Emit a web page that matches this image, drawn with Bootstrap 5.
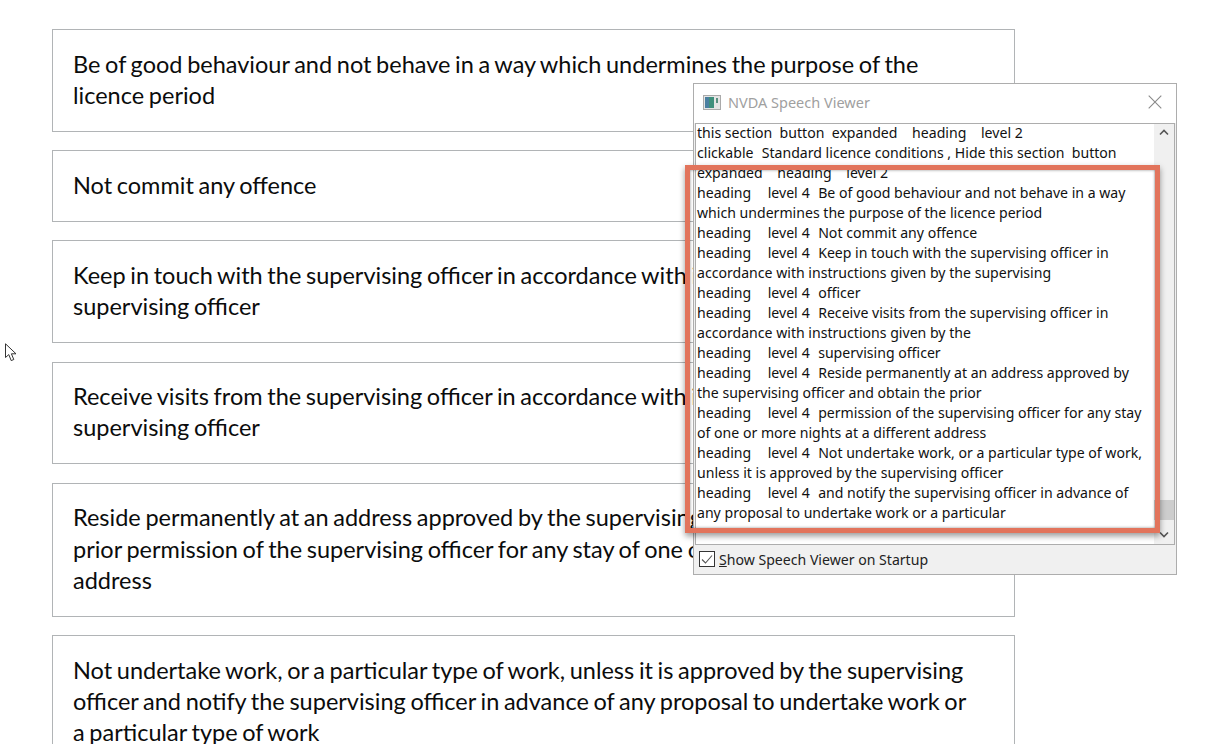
<!DOCTYPE html>
<html lang="en"><head><meta charset="utf-8"><title>Licence conditions</title>
<link href="https://cdn.jsdelivr.net/npm/bootstrap@5.3.0/dist/css/bootstrap.min.css" rel="stylesheet">
<style>
html,body{height:744px;overflow:hidden;background:#fff}
.lic-page{position:relative;height:744px;overflow:hidden;padding:29px 0 0 52px}
.lic-stack{width:963px;gap:18.8px}
.lic-box{border:1px solid #b1b4b6;padding:18.5px 20px 19.5px;font:400 23.5px/31.25px Lato,sans-serif;word-spacing:-1.35px;color:#0b0c0c;white-space:nowrap;overflow:hidden;flex:none}
.cursor-ico{position:absolute;left:5px;top:343px}
.nv-win{position:absolute;left:693px;top:83px;width:484px;height:492px;background:#f0f0f0;border:1px solid #adadad}
.nv-title{height:39px;background:#fff;padding:0 0 3px 9px;font:400 14.5px "Noto Sans",sans-serif;color:#a0a0a0;gap:7px}
.nv-close{margin-left:auto;margin-right:14px}
.nv-body{height:422px;margin:0 1px;border:1px solid #adadad;background:#fff;overflow:hidden;position:relative;padding-left:1px;font:400 14.1px/20px "Noto Sans",sans-serif;color:#111;white-space:pre}
.nv-lines{margin-top:-1px}
.nv-pre{word-spacing:.45px}
.nv-scroll{position:absolute;right:0;top:0;bottom:0;width:20px;background:#f0f0f0}
.nv-thumb{position:absolute;left:0;right:0;top:376px;height:20px;background:#cdcdcd}
.nv-up{position:absolute;left:5px;top:5px}
.nv-down{position:absolute;left:5px;bottom:6px}
.nv-foot{height:29px;padding-left:4px;gap:2px;font:400 14.1px "Noto Sans",sans-serif;color:#222}
.nv-red{position:absolute;left:685px;top:165px;width:475px;height:368px;border:5.5px solid #e2745c;box-shadow:0 3px 6px rgba(0,0,0,.4),inset 0 0 3px rgba(0,0,0,.45)}
</style></head>
<body>
<div class="lic-page">
  <div class="d-flex flex-column lic-stack">
    <div class="lic-box">Be of good behaviour and not behave in a way which undermines the purpose of the<br>licence period</div>
    <div class="lic-box">Not commit any offence</div>
    <div class="lic-box">Keep in touch with the supervising officer in accordance with instructions given by the<br>supervising officer</div>
    <div class="lic-box">Receive visits from the supervising officer in accordance with instructions given by the<br>supervising officer</div>
    <div class="lic-box">Reside permanently at an address approved by the supervising officer and obtain the<br>prior permission of the supervising officer for any stay of one or more nights at a different<br>address</div>
    <div class="lic-box">Not undertake work, or a particular type of work, unless it is approved by the supervising<br>officer and notify the supervising officer in advance of any proposal to undertake work or<br>a particular type of work</div>
  </div>
  <svg class="cursor-ico" width="14" height="19" viewBox="0 0 14 19"><path d="M.5.8V14.5L3.8 11.6 6.2 17.6 8.8 16.5 6.4 10.8H11Z" fill="#fff" stroke="#333" stroke-width="1"/></svg>
  <div class="nv-win">
    <div class="nv-title d-flex align-items-center">
      <svg width="18" height="15" viewBox="0 0 18 15"><rect x=".5" y=".5" width="17" height="14" fill="#e4e4e4" stroke="#aaa"/><rect x="2" y="2" width="9" height="11" fill="#3f8f7c"/><rect x="2" y="2" width="4" height="11" fill="#4a7fa0"/><rect x="13" y="3" width="2" height="5" fill="#5a8f80"/></svg>
      <span>NVDA Speech Viewer</span>
      <svg class="nv-close" width="14" height="14" viewBox="0 0 14 14"><path d="M.7.7 13.3 13.3M13.3.7.7 13.3" stroke="#8a8a8a" stroke-width="1.1" fill="none"/></svg>
    </div>
    <div class="nv-body"><div class="nv-lines"><div>this section  button  expanded    heading    level 2</div><div><span class="nv-pre">clickable  </span>Standard licence conditions , Hide this section  button</div><div>expanded    heading    level 2</div><div><span class="nv-pre">heading    level 4  </span>Be of good behaviour and not behave in a way</div><div>which undermines the purpose of the licence period</div><div><span class="nv-pre">heading    level 4  </span>Not commit any offence</div><div><span class="nv-pre">heading    level 4  </span>Keep in touch with the supervising officer in</div><div>accordance with instructions given by the supervising</div><div><span class="nv-pre">heading    level 4  </span>officer</div><div><span class="nv-pre">heading    level 4  </span>Receive visits from the supervising officer in</div><div>accordance with instructions given by the</div><div><span class="nv-pre">heading    level 4  </span>supervising officer</div><div><span class="nv-pre">heading    level 4  </span>Reside permanently at an address approved by</div><div>the supervising officer and obtain the prior</div><div><span class="nv-pre">heading    level 4  </span>permission of the supervising officer for any stay</div><div>of one or more nights at a different address</div><div><span class="nv-pre">heading    level 4  </span>Not undertake work, or a particular type of work,</div><div>unless it is approved by the supervising officer</div><div><span class="nv-pre">heading    level 4  </span>and notify the supervising officer in advance of</div><div>any proposal to undertake work or a particular</div></div>
      <div class="nv-scroll">
        <svg class="nv-up" width="10" height="7" viewBox="0 0 10 7"><path d="M1 5.5 5 1.5 9 5.5" fill="none" stroke="#555" stroke-width="1.6"/></svg>
        <div class="nv-thumb"></div>
        <svg class="nv-down" width="10" height="7" viewBox="0 0 10 7"><path d="M1 1.5 5 5.5 9 1.5" fill="none" stroke="#555" stroke-width="1.6"/></svg>
      </div>
    </div>
    <div class="nv-foot d-flex align-items-center">
      <svg width="19" height="19" viewBox="0 0 19 19"><rect x="1.5" y="1.5" width="15" height="15" fill="#fff" stroke="#333"/><path d="M4 9.5 7.5 13 14 5.5" fill="none" stroke="#555" stroke-width="1.1"/></svg>
      <span><u>S</u>how Speech Viewer on Startup</span>
    </div>
  </div>
  <div class="nv-red"></div>
</div>
<script src="https://cdn.jsdelivr.net/npm/bootstrap@5.3.0/dist/js/bootstrap.bundle.min.js"></script>
</body></html>
